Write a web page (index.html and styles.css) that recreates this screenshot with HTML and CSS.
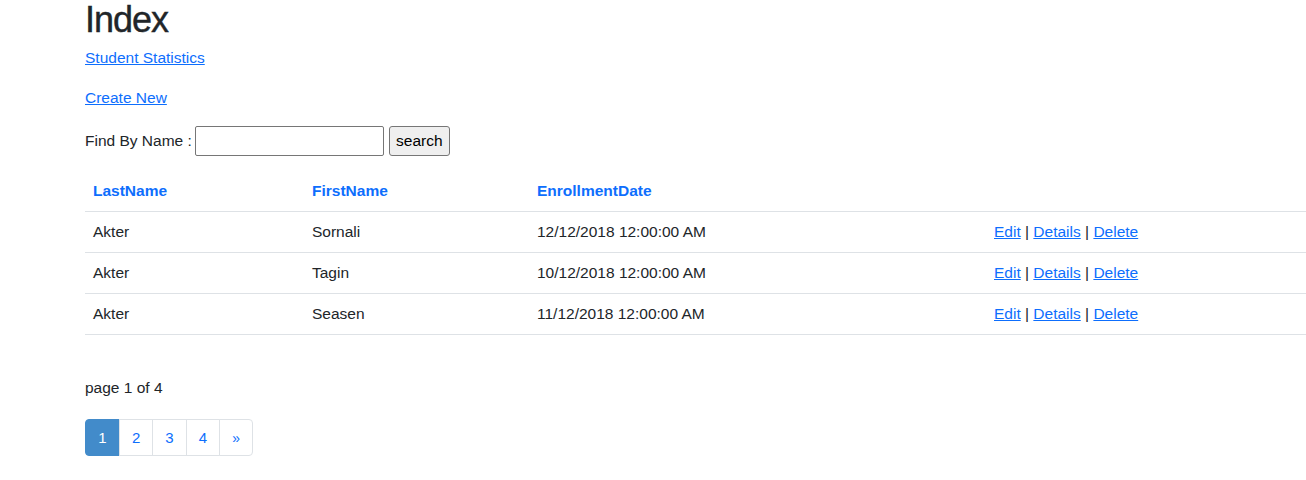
FILE: index.html
```html
<!DOCTYPE html>
<html>
<head>
<meta charset="utf-8">
<link rel="stylesheet" href="styles.css">
</head>
<body>
<div class="container">
  <h1 class="title">Index</h1>
  <p class="para"><a href="#">Student Statistics</a></p>
  <p class="para"><a href="#">Create New</a></p>
  <form class="find">
    <label class="find-label">Find By Name :</label>
    <input class="find-input" type="text">
    <button class="find-btn" type="button">search</button>
  </form>
  <table class="table">
    <thead>
      <tr>
        <th class="c1"><a href="#">LastName</a></th>
        <th class="c2"><a href="#">FirstName</a></th>
        <th class="c3"><a href="#">EnrollmentDate</a></th>
        <th class="c4"></th>
      </tr>
    </thead>
    <tbody>
      <tr>
        <td>Akter</td><td>Sornali</td><td>12/12/2018 12:00:00 AM</td>
        <td><a href="#">Edit</a> | <a href="#">Details</a> | <a href="#">Delete</a></td>
      </tr>
      <tr>
        <td>Akter</td><td>Tagin</td><td>10/12/2018 12:00:00 AM</td>
        <td><a href="#">Edit</a> | <a href="#">Details</a> | <a href="#">Delete</a></td>
      </tr>
      <tr>
        <td>Akter</td><td>Seasen</td><td>11/12/2018 12:00:00 AM</td>
        <td><a href="#">Edit</a> | <a href="#">Details</a> | <a href="#">Delete</a></td>
      </tr>
    </tbody>
  </table>
  <p class="pageinfo">page 1 of 4</p>
  <ul class="pagination">
    <li class="page active"><span>1</span></li>
    <li class="page"><a href="#">2</a></li>
    <li class="page"><a href="#">3</a></li>
    <li class="page"><a href="#">4</a></li>
    <li class="page last"><a href="#">»</a></li>
  </ul>
</div>
</body>
</html>
```
FILE: styles.css
```css
html, body {
  margin: 0;
  padding: 0;
  background: #fff;
}
body {
  font-family: "Liberation Sans", Arial, sans-serif;
  font-size: 15.5px;
  line-height: 24px;
  color: #212529;
}
a {
  color: #0d6efd;
}
.container {
  padding-left: 85px;
}
.title {
  margin: 0 0 6px 0;
  font-size: 36px;
  line-height: 40px;
  font-weight: 500;
  letter-spacing: -1px;
  -webkit-text-stroke: 0.4px #212529;
}
.para {
  margin: 0 0 16px 0;
}
.find {
  display: flex;
  align-items: center;
  height: 30px;
  margin: 0 0 15px 0;
}
.find-label {
  margin-right: 3px;
}
.find-input {
  width: 189px;
  height: 30px;
  box-sizing: border-box;
  border: 1px solid #767676;
  border-radius: 2px;
  margin: 0 5px 0 0;
  padding: 1px 2px;
  font: inherit;
}
.find-btn {
  width: 61px;
  height: 30px;
  box-sizing: border-box;
  border: 1px solid #767676;
  border-radius: 3px;
  background: #efefef;
  font-family: "Liberation Sans", Arial, sans-serif;
  font-size: 15.5px;
  color: #000;
  padding: 0;
}
.table {
  border-collapse: collapse;
  width: 1240px;
  margin-bottom: 16px;
}
.table th, .table td {
  padding: 8px;
  text-align: left;
  vertical-align: top;
  border-bottom: 1px solid #dee2e6;
}
.table th a {
  text-decoration: none;
  font-weight: bold;
}
.c1 { width: 203px; }
.c2 { width: 209px; }
.c3 { width: 441px; }
.pageinfo {
  margin: 41px 0 19px 0;
}
.pagination {
  display: flex;
  list-style: none;
  margin: 0;
  padding: 0;
}
.page a, .page span {
  display: block;
  box-sizing: border-box;
  height: 37px;
  padding: 6px 12px;
  line-height: 24px;
  border: 1px solid #dee2e6;
  margin-left: -1px;
  text-decoration: none;
  color: #0d6efd;
  background: #fff;
  font-size: 15px;
}
.page.active span {
  margin-left: 0;
  background: #428bca;
  border-color: #428bca;
  color: #fff;
  border-radius: 4px 0 0 4px;
  width: 35px;
  text-align: center;
}
.page a {
  min-width: 34px;
  text-align: center;
}
.page.last a {
  border-radius: 0 4px 4px 0;
  font-size: 14px;
}
```
